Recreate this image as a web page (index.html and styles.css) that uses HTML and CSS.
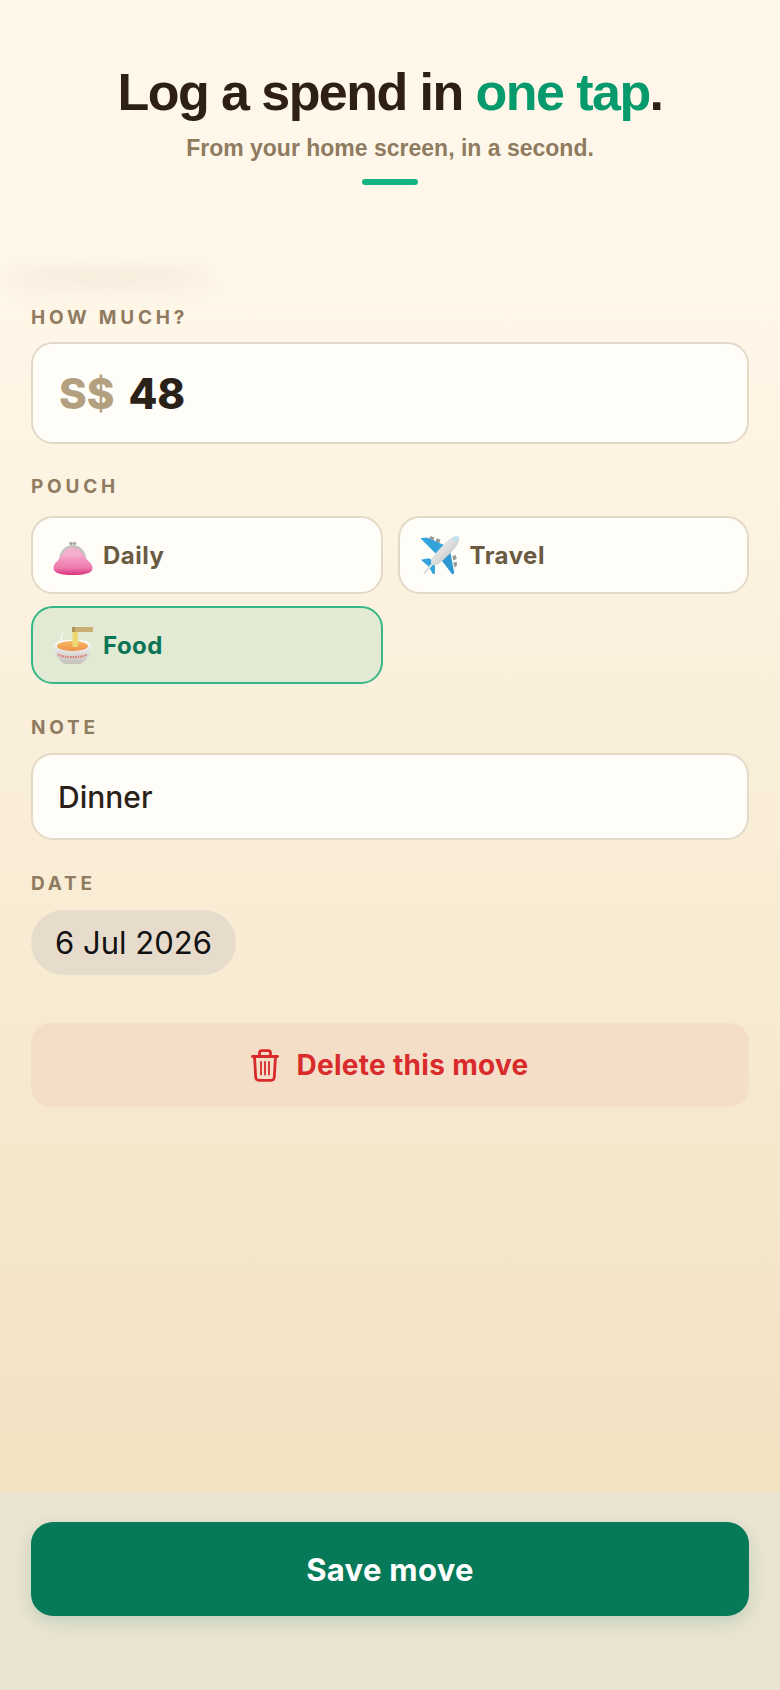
FILE: index.html
```html
<!DOCTYPE html>
<html lang="en">
<head>
    <meta charset="UTF-8">
    <meta name="viewport" content="width=device-width, initial-scale=1.0">
    <title>Log a spend</title>
    <link rel="stylesheet" href="styles.css">
</head>
<body>
    <div class="page">
        <!-- Header -->
        <header class="hero">
            <h1>Log a spend in <span>one tap</span>.</h1>
            <p>From your home screen, in a second.</p>
            <div class="hero-bar"></div>
        </header>

        <div class="hero-smudge"></div>

        <!-- Form -->
        <main class="form">
            <div class="label label-first">HOW MUCH?</div>
            <div class="amount-box">
                <span class="currency">S$</span>
                <span class="amount">48</span>
            </div>

            <div class="label label-pouch">POUCH</div>
            <div class="pouches">
                <div class="pouch">
                    <svg class="emoji" viewBox="0 0 40 40">
                        <defs>
                            <linearGradient id="purseBody" x1="0" y1="0" x2="0" y2="1">
                                <stop offset="0" stop-color="#f6a6c8"/>
                                <stop offset="0.65" stop-color="#ef78ad"/>
                                <stop offset="1" stop-color="#d8327c"/>
                            </linearGradient>
                        </defs>
                        <circle cx="18" cy="8.500" r="1.700" fill="#a9a6a6"/>
                        <circle cx="21.500" cy="8.500" r="1.700" fill="#a9a6a6"/>
                        <path d="M6 24 C7 15 13 10 19.800 10 C26.500 10 32 15 33.500 24 Z" fill="#c4c1c1"/>
                        <path d="M8.500 24 C9.500 16.500 14 12.500 19.800 12.500 C25.500 12.500 30 16.500 31 24 Z" fill="#f6aecd"/>
                        <path d="M8.500 20 C13 22.500 26 22.500 31 20 C32 25 39.500 27 39.500 33 C39.500 38.500 31 40 20 40 C9 40 0.500 38.500 0.500 33 C0.500 27 7.500 25 8.500 20 Z" fill="url(#purseBody)"/>
                    </svg>
                    <span>Daily</span>
                </div>
                <div class="pouch">
                    <svg class="emoji" viewBox="0 0 42 42">
                        <defs>
                            <linearGradient id="planeBody" x1="0" y1="0" x2="1" y2="1">
                                <stop offset="0" stop-color="#f8f8f8"/>
                                <stop offset="0.5" stop-color="#dedede"/>
                                <stop offset="1" stop-color="#8a8a8a"/>
                            </linearGradient>
                        </defs>
                        <path d="M9.500 4 L11 1 L15 2.500 L14 7 Z" fill="#9a9a9a"/>
                        <path d="M16 6.500 L18 3.500 L21.500 5 L20 9.500 Z" fill="#9a9a9a"/>
                        <path d="M34 22 L37.500 21 L38.500 25 L35 27 Z" fill="#9a9a9a"/>
                        <path d="M35 29 L38.500 28 L39 32 L36 34 Z" fill="#9a9a9a"/>
                        <path d="M0.500 3.500 L7 2.500 L29 12 L20 23 Z" fill="#33a3dc"/>
                        <path d="M31 14 L36 40 L34 41.500 L20 23 Z" fill="#2c98d2"/>
                        <path d="M1 26 L9 24.500 L16 28 L15.500 41 L13.500 41 L9 33 Z" fill="#33a3dc"/>
                        <path d="M3.500 39.500 L12 30 C10 26 15 20 25 10 C31 4 35 1 39 1 C41 1 41 3 41 4 C41 9 37 14 31 20 C22 29 17 33 13.500 31.500 L5 41 Z" fill="url(#planeBody)"/>
                        <path d="M33 4 C35 2 39 1 40.500 1.500 C41 4 39.500 7 38 8.500 C37 5.500 35.500 4.500 33 4 Z" fill="#bfe2f3"/>
                    </svg>
                    <span>Travel</span>
                </div>
                <div class="pouch pouch-active">
                    <svg class="emoji" viewBox="0 0 40 40">
                        <defs>
                            <linearGradient id="bowl" x1="0" y1="0" x2="0" y2="1">
                                <stop offset="0" stop-color="#ffffff"/>
                                <stop offset="1" stop-color="#c4c1bc"/>
                            </linearGradient>
                            <linearGradient id="soup" x1="0" y1="0" x2="0" y2="1">
                                <stop offset="0" stop-color="#f7bc66"/>
                                <stop offset="1" stop-color="#ee8f48"/>
                            </linearGradient>
                        </defs>
                        <path d="M9 15 C6 12 11 11 9 8" fill="none" stroke="#ffffff" stroke-width="1.500" opacity="0.7"/>
                        <path d="M1 21 C1 16 9 15 19.500 15 C30 15 38 16 38 21 C38 31 30 39 26 39 L13 39 C9 39 1 31 1 21 Z" fill="url(#bowl)"/>
                        <ellipse cx="19.500" cy="21" rx="15.500" ry="5" fill="url(#soup)"/>
                        <path d="M5 29.500 C11 33 28 33 34 29.500" fill="none" stroke="#dd7a72" stroke-width="2.200" stroke-dasharray="1.500 1"/>
                        <rect x="19" y="2" width="21" height="5" fill="#c9ad72"/>
                        <rect x="19" y="2" width="3" height="5" fill="#b39353"/>
                        <rect x="19.500" y="7" width="5.500" height="15" fill="#eed873"/>
                    </svg>
                    <span>Food</span>
                </div>
            </div>

            <div class="label label-note">NOTE</div>
            <div class="note-box">Dinner</div>

            <div class="label label-date">DATE</div>
            <div class="date-pill">6 Jul 2026</div>

            <button class="delete-btn">
                <svg class="trash" viewBox="0 0 28 33" fill="none" stroke="#d92b2b" stroke-width="2.800" stroke-linecap="round" stroke-linejoin="round">
                    <path d="M1.500 7.500 H26.500"/>
                    <path d="M8.500 7 V4 Q8.500 1.700 10.800 1.700 H17.200 Q19.500 1.700 19.500 4 V7"/>
                    <path d="M3.500 7.500 L4.700 28 Q4.900 31.300 8 31.300 H20 Q23.100 31.300 23.300 28 L24.500 7.500"/>
                    <path d="M10 13 V25.500" stroke-width="1.800"/>
                    <path d="M14 13 V25.500" stroke-width="1.800"/>
                    <path d="M18 13 V25.500" stroke-width="1.800"/>
                </svg>
                Delete this move
            </button>
        </main>

        <!-- Save bar -->
        <footer class="save-bar">
            <button class="save-btn">Save move</button>
        </footer>
    </div>
</body>
</html>
```

FILE: styles.css
```css
* {
    margin: 0;
    padding: 0;
    box-sizing: border-box;
}

body {
    font-family: 'Inter', sans-serif;
    background: #fff8ea;
}

.page {
    position: relative;
    min-height: 100vh;
    display: flex;
    flex-direction: column;
    overflow: hidden;
}

.hero {
    height: 265px;
    padding-top: 61px;
    text-align: center;
    background: #fff8ea;
    font-family: 'Liberation Sans', sans-serif;
    font-weight: 700;
}

.hero h1 {
    font-size: 52px;
    line-height: 62px;
    letter-spacing: -1.55px;
    color: #2e2013;
}

.hero h1 span {
    color: #069a6c;
}

.hero p {
    margin-top: 11px;
    font-size: 23px;
    line-height: 28px;
    color: #8f7b60;
}

.hero-bar {
    width: 56px;
    height: 6px;
    margin: 17px auto 0;
    border-radius: 3px;
    background: #14b585;
}

.hero-smudge {
    position: absolute;
    left: 0;
    top: 268px;
    width: 215px;
    height: 18px;
    border-radius: 50%;
    background: rgba(160, 140, 110, 0.12);
    filter: blur(11px);
}

.form {
    flex: 1;
    padding: 42px 31px 0;
    background: linear-gradient(180deg, #fff7e9 0%, #f2e2c2 100%);
}

.label {
    font-size: 19px;
    line-height: 22px;
    font-weight: 700;
    letter-spacing: 3.8px;
    color: #8f7b60;
}

.amount-box {
    height: 102px;
    margin-top: 13px;
    padding: 0 26px;
    display: flex;
    align-items: center;
    gap: 14px;
    background: #fffdf8;
    border: 2px solid #e4d9c7;
    border-radius: 22px;
    font-size: 42px;
    font-weight: 800;
}

.currency {
    color: #b3a081;
}

.amount {
    color: #2a2218;
}

.label-pouch {
    margin-top: 32px;
}

.pouches {
    margin-top: 18px;
    display: grid;
    grid-template-columns: 1fr 1fr;
    gap: 12px 15px;
}

.pouch {
    height: 78px;
    padding: 0 20px;
    display: flex;
    align-items: center;
    gap: 10px;
    background: #fffdf8;
    border: 2px solid #e4d9c7;
    border-radius: 22px;
    font-size: 24px;
    font-weight: 700;
    letter-spacing: 0.5px;
    color: #6b5a42;
}

.emoji {
    width: 40px;
    height: 40px;
    flex: none;
}

.pouch-active {
    background: #e3ead3;
    border-color: #37b785;
    color: #0a7556;
}

.label-note {
    margin-top: 33px;
}

.note-box {
    height: 87px;
    margin-top: 14px;
    padding: 0 25px;
    display: flex;
    align-items: center;
    background: #fffdf8;
    border: 2px solid #e4d9c7;
    border-radius: 22px;
    font-size: 30px;
    font-weight: 500;
    color: #2a2218;
}

.label-date {
    margin-top: 33px;
}

.date-pill {
    width: 205px;
    height: 65px;
    margin-top: 15px;
    display: flex;
    align-items: center;
    justify-content: center;
    border-radius: 33px;
    background: #e7dccb;
    font-size: 31px;
    color: #111;
}

.delete-btn {
    width: 100%;
    height: 84px;
    margin-top: 48px;
    display: flex;
    align-items: center;
    justify-content: center;
    gap: 17px;
    border: none;
    border-radius: 20px;
    background: #f5dec8;
    font-family: inherit;
    font-size: 28px;
    font-weight: 700;
    letter-spacing: 0.3px;
    color: #d92b2b;
}

.trash {
    width: 28px;
    height: 33px;
}

.save-bar {
    height: 198px;
    padding: 30px 31px 0;
    background: #ebe4d2;
}

.save-btn {
    width: 100%;
    height: 94px;
    border: none;
    border-radius: 22px;
    background: #067959;
    box-shadow: 0 6px 18px rgba(6, 121, 89, 0.18);
    font-family: inherit;
    font-size: 31px;
    font-weight: 700;
    letter-spacing: 0.3px;
    color: #fff;
}
```
